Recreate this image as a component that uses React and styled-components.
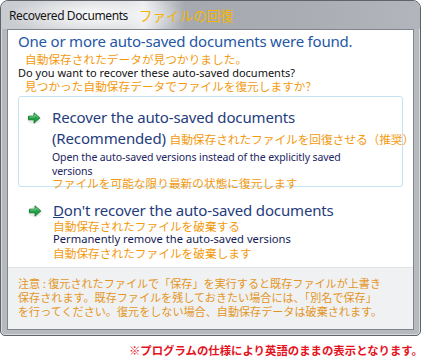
import React from "react";
import styled, { createGlobalStyle } from "styled-components";

const COLORS = {
  frame: "#b6babf",
  frameEdge: "#5f636a",
  heading: "#2457a5",
  command: "#1f3c7c",
  navy: "#1b2563",
  note: "#f39a0f",
  noteDark: "#e3961f",
  titleNote: "#f5b400",
  red: "#e4141e",
};

const JP = `"Noto Sans CJK JP", "Noto Sans", sans-serif`;
const UI = `"Noto Sans", "Noto Sans CJK JP", sans-serif`;

const GlobalStyle = createGlobalStyle`
  body {
    margin: 0;
    background: #fff;
    font-family: ${UI};
    overflow: hidden;
  }
`;

function Arrow() {
  return (
    <svg width="15" height="14" viewBox="0 0 15 14">
      <ellipse cx="7" cy="8" rx="7" ry="5" fill="#000" opacity="0.08" />
      <path
        d="M1.5 5.2 H7 V1.8 L12.8 7 L7 12.2 V8.8 H1.5 Z"
        fill="#21a046"
        stroke="#137a31"
        strokeWidth="0.9"
        strokeLinejoin="round"
      />
      <path d="M2.4 6 H7.8 V3.6 L11 6.6" fill="none" stroke="#7fdc97" strokeWidth="0.8" />
    </svg>
  );
}

export default function App() {
  return (
    <>
      <GlobalStyle />
      <Window>
        <TitleBar>
          <Caption>Recovered Documents</Caption>
          <CaptionNote>ファイルの回復</CaptionNote>
        </TitleBar>
        <Panel>
          <Content>
            <Heading>One or more auto-saved documents were found.</Heading>
            <Note $indent>自動保存されたデータが見つかりました。</Note>
            <Question>Do you want to recover these auto-saved documents?</Question>
            <Note $indent>見つかった自動保存データでファイルを復元しますか?</Note>

            <Command $boxed>
              <Arrow />
              <CommandBody>
                <CommandTitle>
                  Recover the auto-saved documents
                  <br />
                  (Recommended) <InlineNote>自動保存されたファイルを回復させる（推奨）</InlineNote>
                </CommandTitle>
                <Description>
                  Open the auto-saved versions instead of the explicitly saved
                  <br />
                  versions
                </Description>
                <Note $tight>ファイルを可能な限り最新の状態に復元します</Note>
              </CommandBody>
            </Command>

            <Command>
              <Arrow />
              <CommandBody>
                <CommandTitle>
                  <u>D</u>on't recover the auto-saved documents
                </CommandTitle>
                <Note $tight>自動保存されたファイルを破棄する</Note>
                <Description $dark>Permanently remove the auto-saved versions</Description>
                <Note>自動保存されたファイルを破棄します</Note>
              </CommandBody>
            </Command>
          </Content>
          <Footer>
            注意 : 復元されたファイルで「保存」を実行すると既存ファイルが上書き
            <br />
            保存されます。既存ファイルを残しておきたい場合には、「別名で保存」
            <br />
            を行ってください。復元をしない場合、自動保存データは破棄されます。
          </Footer>
        </Panel>
      </Window>
      <SpecNote>※プログラムの仕様により英語のままの表示となります。</SpecNote>
    </>
  );
}

const Window = styled.div`
  width: 421px;
  box-sizing: border-box;
  background: ${COLORS.frame};
  border: 1px solid ${COLORS.frameEdge};
  border-radius: 8px 8px 5px 5px;
  box-shadow: inset 0 0 0 1px rgba(255, 255, 255, 0.45);
  padding: 0 6px 5px 6px;
  overflow: hidden;
`;

const TitleBar = styled.div`
  height: 28px;
  margin: 0 -6px;
  padding-left: 8px;
  display: flex;
  align-items: center;
  gap: 11px;
  background:
    radial-gradient(ellipse 90px 20px at 95px 14px, rgba(255, 255, 255, 0.9), rgba(255, 255, 255, 0) 100%),
    linear-gradient(90deg, #c8cbcf 0%, #d9dbde 30%, #e9eaec 34%, #a6aab0 44%, #a9adb3 70%, #b2b6bc 100%);
`;

const Caption = styled.span`
  font-family: ${UI};
  font-size: 12px;
  color: #161616;
  letter-spacing: -0.4px;
`;

const CaptionNote = styled.span`
  font-family: ${JP};
  font-size: 13.5px;
  color: ${COLORS.titleNote};
`;

const Panel = styled.div`
  background: #fff;
  border: 1px solid #80848b;
  display: flex;
  flex-direction: column;
`;

const Content = styled.div`
  padding: 1px 10px 6px 10px;
  display: flex;
  flex-direction: column;
`;

const Heading = styled.div`
  font-family: ${UI};
  font-size: 15px;
  line-height: 21px;
  color: ${COLORS.heading};
  letter-spacing: -0.2px;
`;

const Note = styled.div`
  font-family: ${JP};
  font-size: 11.7px;
  line-height: ${(p) => (p.$tight ? "13px" : "14px")};
  color: ${COLORS.note};
  padding-left: ${(p) => (p.$indent ? "7px" : "0")};
  margin-top: ${(p) => (p.$tight ? "-2px" : "0")};
  white-space: nowrap;
`;

const Question = styled.div`
  font-family: ${UI};
  font-size: 11px;
  line-height: 13px;
  color: #111;
`;

const InlineNote = styled.span`
  font-family: ${JP};
  font-size: 11.8px;
  color: ${COLORS.note};
`;

const Command = styled.div`
  display: flex;
  align-items: flex-start;
  gap: 10px;
  padding: ${(p) => (p.$boxed ? "10px 8px 0 8px" : "12px 9px 0 9px")};
  margin-top: ${(p) => (p.$boxed ? "3px" : "0")};
  border: 1px solid ${(p) => (p.$boxed ? "#c6e3f4" : "transparent")};
  border-radius: 3px;
  height: ${(p) => (p.$boxed ? "79px" : "auto")};

  svg {
    flex: none;
    margin-top: 4px;
  }
`;

const CommandBody = styled.div`
  display: flex;
  flex-direction: column;
`;

const CommandTitle = styled.div`
  font-family: ${UI};
  font-size: 15px;
  line-height: 21px;
  letter-spacing: -0.15px;
  color: ${COLORS.command};
  white-space: nowrap;
`;

const Description = styled.div`
  font-family: ${UI};
  font-size: ${(p) => (p.$dark ? "11.2px" : "10.5px")};
  line-height: 14px;
  letter-spacing: ${(p) => (p.$dark ? "0" : "-0.1px")};
  color: ${(p) => (p.$dark ? "#141a55" : COLORS.navy)};
  margin-top: ${(p) => (p.$dark ? "0" : "1px")};
  white-space: nowrap;
`;

const Footer = styled.div`
  background: #f0f1f3;
  border-top: 1px solid #dfe2e6;
  padding: 8px 10px 11px 10px;
  font-family: ${JP};
  font-size: 11.1px;
  line-height: 14px;
  color: ${COLORS.noteDark};
  white-space: nowrap;
`;

const SpecNote = styled.div`
  width: 423px;
  text-align: right;
  padding-top: 6px;
  font-family: ${JP};
  font-size: 11.4px;
  font-weight: 700;
  color: ${COLORS.red};
`;
